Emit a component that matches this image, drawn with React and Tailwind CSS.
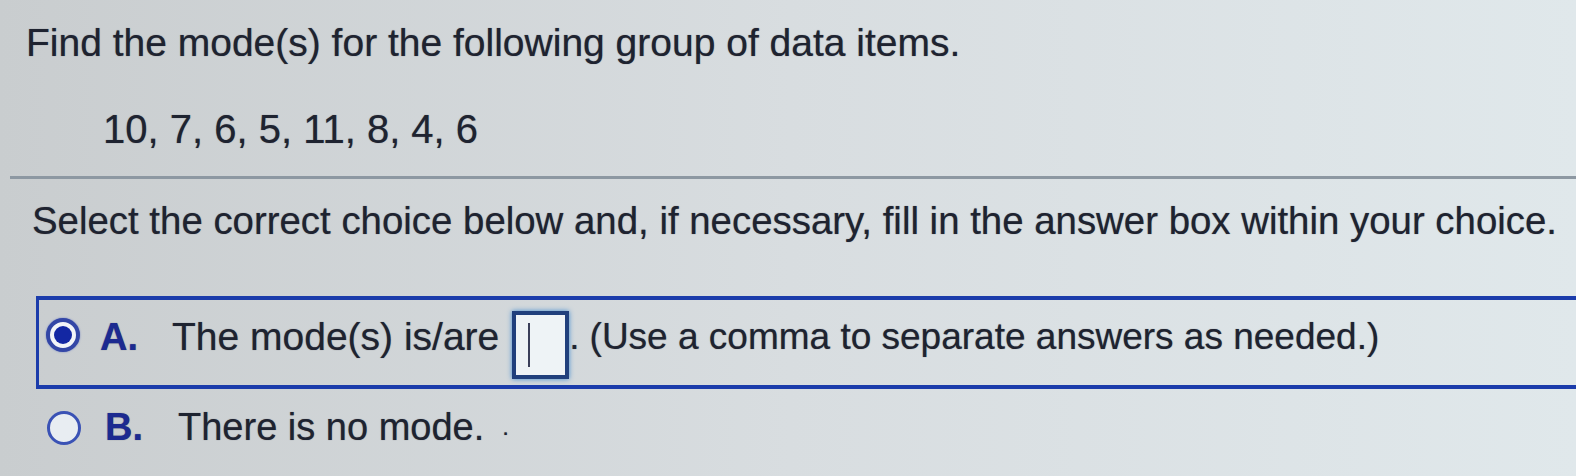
import React from "react";

const Radio = ({ checked }) =>
  checked ? (
    <span className="flex h-[34px] w-[34px] shrink-0 items-center justify-center rounded-full border-[4px] border-[#3346a6] bg-[#f2f4f8] shadow-[0_0_2px_#6f7fc0]">
      <span className="h-[18px] w-[18px] rounded-full bg-[#1327a3]" />
    </span>
  ) : (
    <span className="block h-[34px] w-[34px] shrink-0 rounded-full border-[3px] border-[#3a52b5] bg-[#e8edf2]" />
  );

const App = () => {
  return (
    <div
      className="h-[476px] w-[1576px] overflow-hidden whitespace-nowrap bg-gradient-to-r from-[#c9cdcf] via-[#d8dde0] to-[#e0e8eb] text-[#1e2330] [text-shadow:0_0_1px_rgba(20,25,40,0.55)]"
      style={{ fontFamily: '"Liberation Sans", Arial, sans-serif' }}
    >
      <div className="pl-[26px] pt-[21px]">
        <h1 className="text-[39px] leading-[44px]">Find the mode(s) for the following group of data items.</h1>
        <p className="mt-[42px] pl-[77px] text-[40px] leading-[44px]">10, 7, 6, 5, 11, 8, 4, 6</p>
      </div>

      <div className="ml-[10px] mt-[25px] h-[3px] bg-[#8d98a2]" />

      <p className="mt-[20px] pl-[32px] text-[38.4px] leading-[44px]">
        Select the correct choice below and, if necessary, fill in the answer box within your choice.
      </p>

      <div className="ml-[36px] mt-[53px] flex h-[93px] items-start border-y-4 border-l-[3px] border-[#1b3cab] pl-[7px]">
        <span className="mt-[18px]">
          <Radio checked />
        </span>
        <span className="ml-[20px] mt-[15px] w-[72px] text-[38px] font-bold leading-[44px] text-[#1c2a90]">A.</span>
        <span className="mt-[15px] text-[39px] leading-[44px]">The mode(s) is/are</span>
        <span className="ml-[13px] mt-[11px] flex h-[68px] w-[57px] items-center border-[4px] border-[#1f3f7c] bg-[#eef3f6] pl-[12px] shadow-[0_0_5px_#3d8ad0]">
          <span className="h-[44px] w-[2px] bg-[#3a3f5a]" />
        </span>
        <span className="mt-[15px] text-[37px] leading-[44px]">.</span>
        <span className="ml-[10px] mt-[15px] text-[37px] leading-[44px]">(Use a comma to separate answers as needed.)</span>
      </div>

      <div className="ml-[47px] mt-[16px] flex items-start">
        <span className="mt-[6px]">
          <Radio />
        </span>
        <span className="ml-[24px] w-[73px] text-[38px] font-bold leading-[44px] text-[#1c2a90]">B.</span>
        <span className="text-[38px] leading-[44px]">There is no mode.</span>
        <span className="ml-[18px] text-[24px] leading-[44px]">.</span>
      </div>
    </div>
  );
};

export default App;
